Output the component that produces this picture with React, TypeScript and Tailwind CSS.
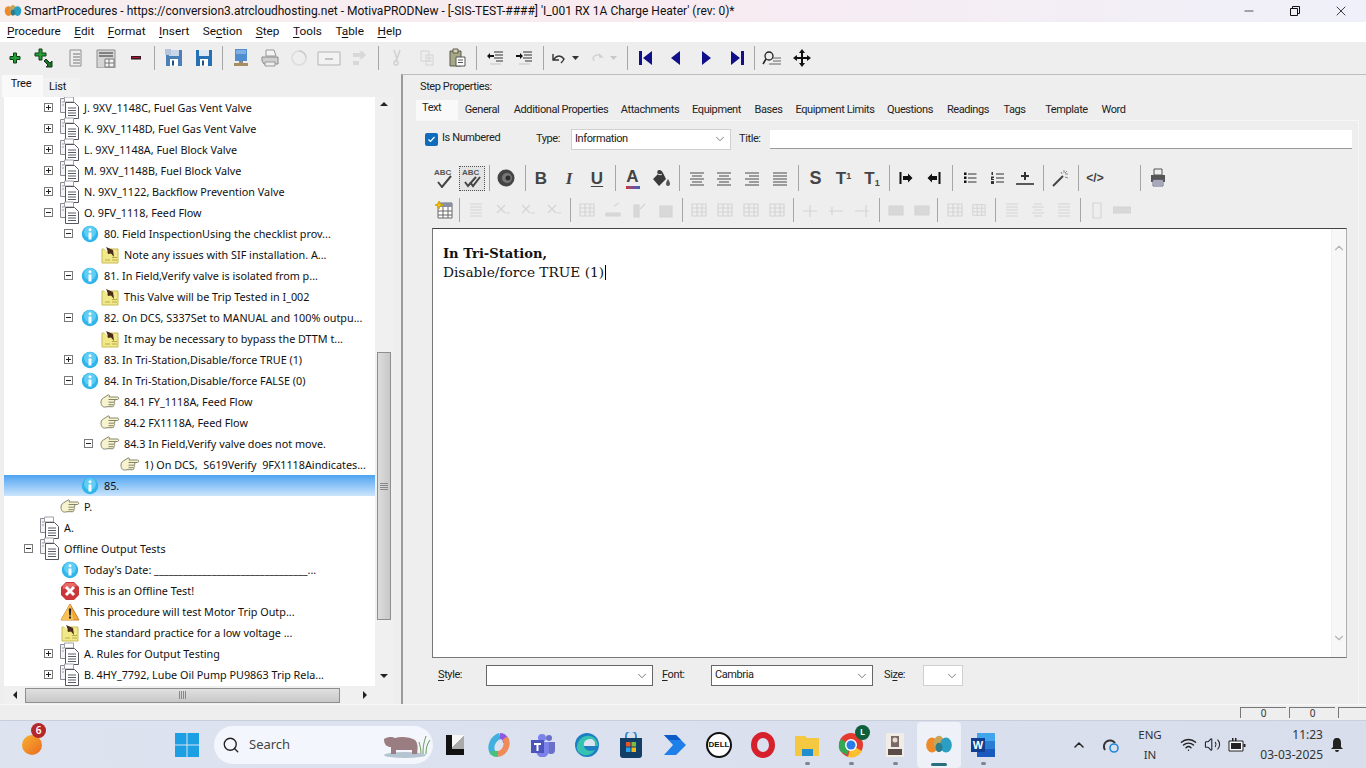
import type { ReactNode } from "react";
import { ChevronDown, ChevronUp, Minus, X, Search, Wifi, Volume2 } from "lucide-react";

type Kind = "docs" | "info" | "note" | "hand" | "error" | "warn";
type Row = { level: 0 | 1 | 2 | 3 | 4; kind: Kind; text: string; exp?: "+" | "-"; selected?: boolean };

const rows: Row[] = [
  { level: 1, kind: "docs", exp: "+", text: "J. 9XV_1148C, Fuel Gas Vent Valve" },
  { level: 1, kind: "docs", exp: "+", text: "K. 9XV_1148D, Fuel Gas Vent Valve" },
  { level: 1, kind: "docs", exp: "+", text: "L. 9XV_1148A, Fuel Block Valve" },
  { level: 1, kind: "docs", exp: "+", text: "M. 9XV_1148B, Fuel Block Valve" },
  { level: 1, kind: "docs", exp: "+", text: "N. 9XV_1122, Backflow Prevention Valve" },
  { level: 1, kind: "docs", exp: "-", text: "O. 9FV_1118, Feed Flow" },
  { level: 2, kind: "info", exp: "-", text: "80. Field InspectionUsing the checklist prov..." },
  { level: 3, kind: "note", text: "Note any issues with SIF installation. A..." },
  { level: 2, kind: "info", exp: "-", text: "81. In Field,Verify valve is isolated from p..." },
  { level: 3, kind: "note", text: "This Valve will be Trip Tested in I_002" },
  { level: 2, kind: "info", exp: "-", text: "82. On DCS, S337Set to MANUAL and 100% outpu..." },
  { level: 3, kind: "note", text: "It may be necessary to bypass the DTTM t..." },
  { level: 2, kind: "info", exp: "+", text: "83. In Tri-Station,Disable/force TRUE (1)" },
  { level: 2, kind: "info", exp: "-", text: "84. In Tri-Station,Disable/force FALSE (0)" },
  { level: 3, kind: "hand", text: "84.1 FY_1118A, Feed Flow" },
  { level: 3, kind: "hand", text: "84.2 FX1118A, Feed Flow" },
  { level: 3, kind: "hand", exp: "-", text: "84.3 In Field,Verify valve does not move." },
  { level: 4, kind: "hand", text: "1) On DCS,  S619Verify  9FX1118Aindicates..." },
  { level: 2, kind: "info", text: "85.", selected: true },
  { level: 1, kind: "hand", text: "P." },
  { level: 0, kind: "docs", text: "A." },
  { level: 0, kind: "docs", exp: "-", text: "Offline Output Tests" },
  { level: 1, kind: "info", text: "Today's Date: ________________________________..." },
  { level: 1, kind: "error", text: "This is an Offline Test!" },
  { level: 1, kind: "warn", text: "This procedure will test Motor Trip Outp..." },
  { level: 1, kind: "note", text: "The standard practice for a low voltage ..." },
  { level: 1, kind: "docs", exp: "+", text: "A. Rules for Output Testing" },
  { level: 1, kind: "docs", exp: "+", text: "B. 4HY_7792, Lube Oil Pump PU9863 Trip Rela..." },
];

const indent = ["pl-[16px]", "pl-[36px]", "pl-[56px]", "pl-[76px]", "pl-[96px]"];

function DocsIcon() {
  return (
    <svg width="22" height="24" viewBox="0 0 22 24" fill="none">
      <path d="M1.5 2.5h9l2 2v12h-11z" fill="#f4f4f6" stroke="#8a8a94" />
      <path d="M5.5 1h9v5h-9z" fill="#fff" stroke="#a0a0a8" />
      <path d="M6.5 6.5h9l4 4v12h-13z" fill="#fff" stroke="#55555f" />
      <path d="M9 12h8M9 14.5h8M9 17h8M9 19.5h8" stroke="#5a5a68" />
      <path d="M3.5 6h1M3.5 9h1" stroke="#444" />
    </svg>
  );
}

function InfoIcon() {
  return (
    <svg width="18" height="18" viewBox="0 0 18 18">
      <circle cx="9" cy="9" r="8.2" fill="#2fb5ea" />
      <circle cx="9" cy="7" r="6" fill="#5fcdf4" />
      <circle cx="9" cy="4.8" r="1.5" fill="#fff" />
      <path d="M7.5 7.5h3v7h-3z" fill="#fff" />
    </svg>
  );
}

function NoteIcon() {
  return (
    <svg width="18" height="18" viewBox="0 0 18 18">
      <path d="M1 3h16v14H1z" fill="#f1e88a" stroke="#c8bb56" />
      <path d="M11 11.5h5M11 14h5M4 14h5" stroke="#b9ac45" />
      <path d="M5 1l7 3 1 7-3-3.5-3 .5z" fill="#4a2a18" />
      <path d="M1 1l4 0 2 5z" fill="#fff" />
    </svg>
  );
}

function HandIcon() {
  return (
    <svg width="20" height="17" viewBox="0 0 20 17" fill="#f8f3cf" stroke="#85856a" className="mt-[2px]">
      <path d="M1 8C1 5 3 4 5 3l3-2c1-.5 2 .5 1 2h8.500c1.500 0 1.500 2.500 0 2.500H14c1.200.3 1.200 2.500 0 2.700 1 .4.800 2.300-.3 2.500.5.800 0 2-1 2H7C3 14 1 12 1 8z" />
      <path d="M8.500 5.500H14M8.500 8.200H14M8.500 10.700h5" />
    </svg>
  );
}

function ErrorIcon() {
  return (
    <svg width="20" height="20" viewBox="0 0 20 20">
      <path d="M6 1h8l5 5v8l-5 5H6l-5-5V6z" fill="#c9373a" />
      <path d="M6 2h8l3 3-14 3V5z" fill="#e66a68" />
      <path d="M6 6l8 8M14 6l-8 8" stroke="#fff" strokeWidth="3" />
    </svg>
  );
}

function WarnIcon() {
  return (
    <svg width="20" height="18" viewBox="0 0 20 18">
      <path d="M10 1l9 16H1z" fill="#f5a83a" stroke="#c5802a" />
      <path d="M10 1l3.500 16H1z" fill="#f8c25a" />
      <path d="M8.800 5.500h2.400l-.4 7h-1.600z" fill="#222" />
      <path d="M9 13.500h2v2H9z" fill="#222" />
    </svg>
  );
}

const kindIcon: Record<Kind, ReactNode> = {
  docs: <DocsIcon />,
  info: <InfoIcon />,
  note: <NoteIcon />,
  hand: <HandIcon />,
  error: <ErrorIcon />,
  warn: <WarnIcon />,
};

function Expander({ open }: { open: boolean }) {
  return (
    <div className="relative h-[9px] w-[9px] border border-[#7a7a7a] bg-white">
      <div className="absolute left-[1px] top-[3px] h-px w-[5px] bg-[#222]" />
      {!open && <div className="absolute left-[3px] top-[1px] h-[5px] w-px bg-[#222]" />}
    </div>
  );
}

function TreeRow({ row }: { row: Row }) {
  return (
    <div
      className={`flex h-[21px] shrink-0 items-center ${indent[row.level]} ${
        row.selected ? "bg-gradient-to-b from-[#4ba3f0] to-[#cbe5fb]" : ""
      }`}
    >
      <div className="flex w-4 shrink-0 justify-center">{row.exp && <Expander open={row.exp === "-"} />}</div>
      <div className="ml-[2px] flex h-[21px] w-6 shrink-0 items-center justify-center">{kindIcon[row.kind]}</div>
      <span className="ml-[2px] mt-[1px] whitespace-pre text-[10.800px] text-[#111]">{row.text}</span>
    </div>
  );
}

function Tri({ dir }: { dir: "up" | "down" | "left" | "right" }) {
  const d = { up: "M0 5l4-4 4 4z", down: "M0 2l4 4 4-4z", left: "M5 0L1 4l4 4z", right: "M2 0l4 4-4 4z" }[dir];
  return (
    <svg width="8" height="8" viewBox="0 0 8 8">
      <path d={d} fill="#222" />
    </svg>
  );
}

// top toolbar icons
function Ico({ children, w = 20, h = 20 }: { children: ReactNode; w?: number; h?: number }) {
  return (
    <svg width={w} height={h} viewBox={`0 0 ${w} ${h}`} fill="none">
      {children}
    </svg>
  );
}

const GreenPlus = () => (
  <Ico>
    <path d="M8.500 5h3v3.500H15v3h-3.500V15h-3v-3.500H5v-3h3.500z" fill="#22a035" stroke="#123d18" />
  </Ico>
);
const GreenPlusArrow = () => (
  <Ico w={22}>
    <path d="M5 1h3v4h4v3H8v4H5V8H1V5h4z" fill="#22a035" stroke="#123d18" />
    <path d="M12 11l4 4 2-2v6h-6l2-2-4-4z" fill="#1f6f2a" stroke="#0f3a15" />
  </Ico>
);
const DocLines = () => (
  <Ico>
    <path d="M4 2h11v16H4z" fill="#eee" stroke="#8f8f8f" />
    <path d="M7 6h7M7 9h7M7 12h7M7 15h7" stroke="#777" />
  </Ico>
);
const DocTable = () => (
  <Ico w={22}>
    <path d="M2 2h18v18H2z" fill="#d5d5d5" stroke="#8f8f8f" />
    <path d="M4 5h14M4 8h14" stroke="#666" strokeWidth="1.500" />
    <path d="M10 11h9v8h-9zM10 15h9M14 11v8" stroke="#777" fill="#f4f4f4" />
  </Ico>
);
const RedMinus = () => (
  <Ico>
    <path d="M5 8h10v3.500H5z" fill="#3b1420" />
    <path d="M6 9h8v1H6z" fill="#a01c30" />
  </Ico>
);
const SaveIcon = ({ pale }: { pale?: boolean }) => (
  <Ico>
    <path d="M2 2h16v16H2z" fill={pale ? "#4b7fb8" : "#2670b5"} />
    <path d="M5 2h10v6H5z" fill={pale ? "#c8d8ea" : "#dce8f4"} />
    <path d="M6 11h8v7H6z" fill="#fff" />
    <path d="M8 12.500h2v5H8z" fill="#1d4f84" />
    {pale && <path d="M1 1h6v6H1z" fill="#b5c6da" />}
  </Ico>
);
const MonitorIcon = () => (
  <Ico>
    <path d="M4 1h12v12H4z" fill="#4f8ed0" />
    <path d="M5 2h10v4H5z" fill="#7fb0e3" />
    <path d="M8 13h4v2H8z" fill="#888" />
    <path d="M3 15h14v3H3z" fill="#a88e60" />
  </Ico>
);
const PrinterIcon = () => (
  <Ico>
    <path d="M6 2l8 0 2 6H6z" fill="#f4f4f4" stroke="#999" />
    <path d="M2 9h16v7H4l-2-3z" fill="#cfcfcf" stroke="#8a8a8a" />
    <path d="M5 14h10v4H5z" fill="#eee" stroke="#999" />
  </Ico>
);
const GhostCircle = () => (
  <Ico>
    <circle cx="10" cy="10" r="7" stroke="#dcdcdc" strokeWidth="1.500" />
    <path d="M10 3a7 7 0 017 7" stroke="#cccccc" strokeWidth="1.500" />
  </Ico>
);
const GhostBox = () => (
  <Ico w={26}>
    <path d="M2 4h22v13H2z" fill="#f2f2f2" stroke="#b4b4b4" />
    <path d="M9 10h8v2H9z" fill="#c4c4c4" />
  </Ico>
);
const GhostArrows = () => (
  <Ico>
    <path d="M4 5h8l-2-2h3l4 4-4 4h-3l2-2H4zM4 13h6v4H4z" fill="#d8d8d8" />
  </Ico>
);
const GhostScissors = () => (
  <Ico>
    <path d="M7 2l3 9 3-9M7 15a2 2 0 104 0 2 2 0 00-4 0M10 11l-3 3" stroke="#d0d0d0" strokeWidth="1.500" />
  </Ico>
);
const GhostCopy = () => (
  <Ico>
    <path d="M4 3h8v10H4zM9 7h7v10H9z" fill="#ededed" stroke="#d4d4d4" />
    <path d="M10 10h5M10 13h5" stroke="#d4d4d4" />
  </Ico>
);
const PasteIcon = () => (
  <Ico>
    <path d="M3 3h11v15H3z" fill="#a7a888" stroke="#5a5a48" />
    <path d="M6 1h5v4H6z" fill="#d5d5c0" stroke="#5a5a48" />
    <path d="M9 9h9v9H9z" fill="#fff" stroke="#555" />
    <path d="M11 12h5M11 14.500h5" stroke="#555" />
  </Ico>
);
const Outdent = ({ flip }: { flip?: boolean }) => (
  <Ico>
    <path d="M9 4h9M10 7h8M9 10h9M11 13h7" stroke="#333" strokeWidth="1.200" />
    <path d="M5 16h11" stroke="#c4c4c4" />
    {flip ? <path d="M2 7h4V5l3 3L6 11V9H2z" fill="#111" /> : <path d="M9 7H5V5L2 8l3 3V9h4z" fill="#111" />}
  </Ico>
);
const UndoIcon = ({ ghost }: { ghost?: boolean }) => (
  <div className="flex items-center gap-[6px]">
    <svg width="14" height="14" viewBox="0 0 14 14" fill="none">
      <path
        d={ghost ? "M9 3l3 3-3 0M12 6c-2-3-7-3-9 1l1 3" : "M1 3v6h6M2 8c3-4 7-4 10 0-1 2-2 3-3 4"}
        stroke={ghost ? "#d0d0d0" : "#333"}
        strokeWidth="1.400"
      />
    </svg>
    <svg width="7" height="4" viewBox="0 0 7 4">
      <path d="M0 0h7L3.500 4z" fill={ghost ? "#c8c8c8" : "#333"} />
    </svg>
  </div>
);
const NavIcon = ({ d }: { d: string }) => (
  <Ico>
    <path d={d} fill="#10108a" />
  </Ico>
);
const FindIcon = () => (
  <Ico w={22}>
    <circle cx="8" cy="8" r="4" stroke="#222" strokeWidth="1.300" />
    <path d="M5 11l-3 5" stroke="#222" strokeWidth="1.500" />
    <path d="M12 10h8M12 13h8M8 16h12" stroke="#666" />
  </Ico>
);
const MoveIcon = () => (
  <Ico>
    <path d="M10 1l3 4h-2v4h4V7l4 3-4 3v-2h-4v4h2l-3 4-3-4h2v-4H5v2l-4-3 4-3v2h4V5H7z" fill="#111" />
  </Ico>
);

function Slot({ w, children }: { w: string; children?: ReactNode }) {
  return <div className={`flex h-full shrink-0 items-center justify-center ${w}`}>{children}</div>;
}

function Sep({ w, h = "h-[24px]" }: { w: string; h?: string }) {
  return (
    <div className={`flex h-full shrink-0 items-center justify-center ${w}`}>
      <div className={`w-px bg-[#a6a6a6] ${h}`} />
    </div>
  );
}

function Glyph({ children, className = "" }: { children: ReactNode; className?: string }) {
  return <span className={`font-['Liberation_Sans'] text-[17px] font-bold leading-none text-[#444] ${className}`}>{children}</span>;
}

const Spell = ({ double }: { double?: boolean }) => (
  <div className="relative h-5 w-5">
    <span className="absolute left-0 top-[-1px] font-['Liberation_Sans'] text-[8px] font-bold text-[#555]">ABC</span>
    <svg width="20" height="20" viewBox="0 0 20 20" fill="none" className="absolute inset-0">
      {double ? (
        <path d="M3 14l3 4 8-9M8 14l3 4 7-9" stroke="#444" strokeWidth="2" />
      ) : (
        <path d="M4 14l4 5 9-11" stroke="#444" strokeWidth="2" />
      )}
    </svg>
  </div>
);

const Speaker = () => (
  <Ico>
    <circle cx="10" cy="10" r="8.500" fill="#444" />
    <circle cx="11" cy="10" r="5" fill="#777" />
    <circle cx="12" cy="10" r="2.500" fill="#2e2e2e" />
  </Ico>
);
const FontColor = () => (
  <div className="flex flex-col items-center">
    <Glyph className="text-[16px]">A</Glyph>
    <div className="mt-[1px] h-[3px] w-[14px] bg-gradient-to-r from-[#c8302e] via-[#7a4a98] to-[#3060b0]" />
  </div>
);
const Bucket = () => (
  <Ico>
    <path d="M8 2c-2 0-2 3-1 4L2 11l6 7 7-7-3-6c-1-2-2-3-4-3z" fill="#3a3a3a" />
    <path d="M7 6c1 1 3 1 4 0" stroke="#eee" />
    <path d="M17 11c1 2 2 3 2 5a2 2 0 01-4 0c0-2 1-3 2-5z" fill="#555" />
  </Ico>
);
const Align = ({ d }: { d: string }) => (
  <Ico w={16} h={16}>
    <path d={d} stroke="#4a4a4a" strokeWidth="1.200" />
  </Ico>
);
const ArrowBar = ({ flip }: { flip?: boolean }) => (
  <Ico w={14} h={14}>
    <path d={flip ? "M11.500 1h2v12h-2zM.5 7L5 2.500V5h5v4H5v2.500z" : "M.5 1h2v12h-2zM13.500 7L9 2.500V5H4v4h5v2.500z"} fill="#111" />
  </Ico>
);
const BulletList = () => (
  <Ico w={14} h={14}>
    <path d="M1 1.500h2.500V4H1zM1 5.500h2.500V8H1zM1 9.500h2.500V12H1z" fill="#111" />
    <path d="M5 3h8.500M5 7h8.500M5 11h8.500" stroke="#333" strokeWidth="1.200" />
  </Ico>
);
const NumList = () => (
  <Ico w={14} h={14}>
    <path d="M1.500 1h1.500v3H1.500zM1 5.500h3V7H2.500v1H4v1H1zM1 10h3v3H1z" fill="#333" />
    <path d="M6 3h8M6 7h8M6 11h8" stroke="#333" strokeWidth="1.200" />
  </Ico>
);
const RuleIcon = () => (
  <Ico w={18} h={18}>
    <path d="M8 3h2v3h3v2h-3v3H8V8H5V6h3z" fill="#333" />
    <path d="M0 15h18" stroke="#333" strokeWidth="1.600" />
  </Ico>
);
const Wand = () => (
  <Ico>
    <path d="M2 18L12 8" stroke="#444" strokeWidth="2" />
    <path d="M13 2v3M17 6h-3M16 3l-2 2M10 4l1 2M17 10l-3-1" stroke="#888" />
  </Ico>
);
const PrintDark = () => (
  <Ico>
    <path d="M6 1h8v6H6z" fill="#eee" stroke="#555" />
    <path d="M3 7h14v7H3z" fill="#555" />
    <path d="M5 12h10v6H5z" fill="#e6e6ef" stroke="#6a6a88" />
    <path d="M6 14h8M6 16h8" stroke="#6a6a88" />
  </Ico>
);
const TableNew = () => (
  <Ico w={20} h={20}>
    <path d="M5 3h14v15H5z" fill="#fff" stroke="#666" />
    <path d="M5 3h14v4H5z" fill="#8a8fa8" />
    <path d="M5 11h14M5 15h14M10 7v11M15 7v11" stroke="#666" />
    <path d="M6 1l1 3 3 1-3 1-1 3-1-3-3-1 3-1z" fill="#f2c51c" stroke="#d9a800" />
  </Ico>
);
const Dis = ({ d, fill }: { d: string; fill?: boolean }) => (
  <Ico w={18} h={18}>
    <path d={d} stroke="#d4d4d4" fill={fill ? "#d8d8d8" : "none"} strokeWidth="1.100" />
  </Ico>
);
const grid = "M2 3h14v12H2zM2 7h14M2 11h14M7 3v12M12 3v12";
const lines = "M3 3h12M3 6h12M3 9h12M3 12h12M3 15h12";
const xx = "M4 4l8 8M12 4l-8 8M13 12h4";

function Select({ w, text, bordered }: { w: string; text?: string; bordered?: boolean }) {
  return (
    <div
      className={`flex h-[21px] shrink-0 items-center justify-between bg-white pl-[3px] pr-[3px] text-[#222] ${w} ${
        bordered ? "border border-[#666]" : "border border-[#d0d0d0]"
      }`}
    >
      <span>{text}</span>
      <ChevronDown size={14} strokeWidth={1.300} className="text-[#555]" />
    </div>
  );
}

function Ul({ pre, u, post }: { pre?: string; u: string; post: string }) {
  return (
    <span>
      {pre}
      <span className="underline underline-offset-2">{u}</span>
      {post}
    </span>
  );
}

const Blobs = ({ size = 18 }: { size?: number }) => (
  <svg width={size} height={size} viewBox="0 0 24 24">
    <ellipse cx="6" cy="12" rx="5" ry="6.500" fill="#ef8a2b" />
    <ellipse cx="12" cy="11" rx="4.500" ry="7" fill="#c7a65a" />
    <ellipse cx="18" cy="12" rx="5" ry="6.500" fill="#2a9fc4" />
    <ellipse cx="12" cy="14" rx="3" ry="4" fill="#2b7d90" />
  </svg>
);

function TaskSlot({ children, dot, active }: { children: ReactNode; dot?: boolean; active?: boolean }) {
  return (
    <div className={`relative flex h-[46px] w-[44px] shrink-0 items-center justify-center rounded-[4px] ${active ? "bg-[#eef1f8]" : ""}`}>
      {children}
      {dot && <div className="absolute bottom-[3px] h-[3px] w-[5px] rounded-full bg-[#7d8590]" />}
      {active && <div className="absolute bottom-[2px] h-[3px] w-[16px] rounded-full bg-[#2a6f80]" />}
    </div>
  );
}

function Status({ w, val }: { w: string; val?: string }) {
  return (
    <div className={`flex h-[11px] shrink-0 items-center justify-center border-l border-t border-[#777] text-[10px] leading-none text-[#333] ${w}`}>
      {val}
    </div>
  );
}

export default function App() {
  return (
    <div className="flex h-[768px] w-[1366px] flex-col overflow-hidden bg-[#eeeeee] font-['Noto_Sans',sans-serif] text-[#111]">
      {/* title bar */}
      <div className="flex h-[22px] shrink-0 items-center bg-gradient-to-r from-[#f7eeee] via-[#f8ebf1] to-[#eff0f9] pr-[2px]">
        <div className="ml-[2px] flex w-[22px] justify-center">
          <Blobs />
        </div>
        <span className="whitespace-pre font-['Roboto'] text-[12px] text-[#111]">
          SmartProcedures - https://conversion3.atrcloudhosting.net - MotivaPRODNew - [-SIS-TEST-####] 'I_001 RX 1A Charge Heater' (rev: 0)*
        </span>
        <div className="ml-auto flex items-center">
          <div className="flex w-[46px] justify-center"><Minus size={14} strokeWidth={1.200} /></div>
          <div className="flex w-[46px] justify-center">
            <svg width="12" height="12" viewBox="0 0 12 12" fill="none" stroke="#111">
              <path d="M1.500 3.500h7v7h-7zM3.500 3.500v-2h7v7h-2" />
            </svg>
          </div>
          <div className="flex w-[46px] justify-center"><X size={16} strokeWidth={1.200} /></div>
        </div>
      </div>

      {/* menu */}
      <div className="flex h-[20px] shrink-0 items-center gap-[13.500px] bg-white pl-[7px] font-['Roboto'] text-[11.800px] text-[#111]">
        <Ul u="P" post="rocedure" />
        <Ul u="E" post="dit" />
        <Ul u="F" post="ormat" />
        <Ul u="I" post="nsert" />
        <Ul pre="Se" u="c" post="tion" />
        <Ul u="S" post="tep" />
        <Ul u="T" post="ools" />
        <Ul pre="T" u="a" post="ble" />
        <Ul u="H" post="elp" />
      </div>

      {/* main toolbar */}
      <div className="flex h-[32px] shrink-0 items-center">
        <Slot w="w-[30px]"><GreenPlus /></Slot>
        <Slot w="w-[30px]"><GreenPlusArrow /></Slot>
        <Slot w="w-[31px]"><DocLines /></Slot>
        <Slot w="w-[30px]"><DocTable /></Slot>
        <Slot w="w-[29px]"><RedMinus /></Slot>
        <Sep w="w-[9px]" />
        <Slot w="w-[30px]"><SaveIcon pale /></Slot>
        <Slot w="w-[29px]"><SaveIcon /></Slot>
        <Sep w="w-[8px]" />
        <Slot w="w-[29px]"><MonitorIcon /></Slot>
        <Slot w="w-[29px]"><PrinterIcon /></Slot>
        <Slot w="w-[30px]"><GhostCircle /></Slot>
        <Slot w="w-[30px]"><GhostBox /></Slot>
        <Slot w="w-[30px]"><GhostArrows /></Slot>
        <Sep w="w-[8px]" />
        <Slot w="w-[30px]"><GhostScissors /></Slot>
        <Slot w="w-[29px]"><GhostCopy /></Slot>
        <Slot w="w-[31px]"><PasteIcon /></Slot>
        <Sep w="w-[8px]" />
        <Slot w="w-[29px]"><Outdent /></Slot>
        <Slot w="w-[30px]"><Outdent flip /></Slot>
        <Sep w="w-[8px]" />
        <Slot w="w-[37px]"><UndoIcon /></Slot>
        <Slot w="w-[39px]"><UndoIcon ghost /></Slot>
        <Sep w="w-[8px]" />
        <Slot w="w-[30px]"><NavIcon d="M3 3h3v14H3zM16 3v14L7 10z" /></Slot>
        <Slot w="w-[30px]"><NavIcon d="M14 3v14L5 10z" /></Slot>
        <Slot w="w-[30px]"><NavIcon d="M6 3v14l9-7z" /></Slot>
        <Slot w="w-[31px]"><NavIcon d="M14 3h3v14h-3zM4 3v14l9-7z" /></Slot>
        <Sep w="w-[5px]" />
        <Slot w="w-[30px]"><FindIcon /></Slot>
        <Slot w="w-[30px]"><MoveIcon /></Slot>
      </div>

      {/* main */}
      <div className="flex h-[630px] shrink-0">
        {/* left panel */}
        <div className="flex w-[393px] shrink-0 flex-col pl-[4px]">
          <div className="flex h-[23px] shrink-0 items-end font-['Roboto'] text-[11px] tracking-[-0.2px]">
            <div className="-ml-[2px] flex h-[22px] w-[41px] items-start justify-center bg-[#f9f9f9] pr-[3px] pt-[1px]">Tree</div>
            <div className="flex h-[19px] w-[37px] items-center justify-center bg-[#f1f1f1] pr-[8px]">List</div>
          </div>
          <div className="flex h-[589px] shrink-0">
            <div className="flex w-[371px] flex-col overflow-hidden bg-white">
              {rows.map((r) => (
                <TreeRow key={r.text} row={r} />
              ))}
            </div>
            <div className="flex w-[18px] flex-col items-center bg-[#f0f0f0]">
              <div className="mt-[4px]"><Tri dir="up" /></div>
              <div className="mt-[243px] flex h-[268px] w-[14px] items-center justify-center border border-[#8e8e8e] bg-gradient-to-r from-[#dcdcdc] to-[#c8c8c8]">
                <div className="h-[7px] w-[8px] bg-[repeating-linear-gradient(180deg,#888_0px,#888_1px,transparent_1px,transparent_2px)]" />
              </div>
              <div className="mt-[52px]"><Tri dir="down" /></div>
            </div>
          </div>
          <div className="flex h-[18px] w-[389px] shrink-0 items-center bg-[#f0f0f0]">
            <div className="ml-[8px]"><Tri dir="left" /></div>
            <div className="ml-[5px] flex h-[15px] w-[315px] items-center justify-center border border-[#8e8e8e] bg-gradient-to-b from-[#e0e0e0] to-[#c8c8c8]">
              <div className="h-[8px] w-[7px] bg-[repeating-linear-gradient(90deg,#888_0px,#888_1px,transparent_1px,transparent_2px)]" />
            </div>
            <div className="ml-[21px]"><Tri dir="right" /></div>
          </div>
        </div>

        {/* splitter + right panel */}
        <div className="w-[8px] shrink-0" />
        <div className="flex flex-1 flex-col border-l-2 border-t border-[#9a9a9a] border-t-[#bdbdbd] font-['Roboto'] text-[11px] tracking-[-0.4px]">
          <div className="flex h-[25px] shrink-0 items-center pl-[17px] text-[#222]">Step Properties:</div>
          <div className="flex h-[20px] shrink-0 items-center whitespace-nowrap pl-[13px] text-[#222]">
            <div className="flex h-[21px] w-[42px] items-start justify-start bg-[#f9f9f9] pl-[6px]">Text</div>
            <div className="flex w-[48px] justify-center pt-px">General</div>
            <div className="ml-[7px] flex w-[96px] justify-center pt-px">Additional Properties</div>
            <div className="ml-[12px] flex w-[58px] justify-center pt-px">Attachments</div>
            <div className="ml-[13px] flex w-[49px] justify-center pt-px">Equipment</div>
            <div className="ml-[13px] flex w-[29px] justify-center pt-px">Bases</div>
            <div className="ml-[13px] flex w-[78px] justify-center pt-px">Equipment Limits</div>
            <div className="ml-[13px] flex w-[46px] justify-center pt-px">Questions</div>
            <div className="ml-[13px] flex w-[44px] justify-center pt-px">Readings</div>
            <div className="ml-[13px] flex w-[23px] justify-center pt-px">Tags</div>
            <div className="ml-[19px] flex w-[43px] justify-center pt-px">Template</div>
            <div className="ml-[13px] flex w-[25px] justify-center pt-px">Word</div>
          </div>

          <div className="ml-[13px] mr-[7px] flex h-[584px] flex-col border-t border-r border-[#f6f6f6] pl-[9px] pr-[6px]">
            {/* type row */}
            <div className="mt-[8px] flex h-[20px] shrink-0 items-center text-[#222]">
              <div className="mr-[4px] flex h-[13px] w-[13px] items-center justify-center rounded-[2px] bg-[#0f6cbd]">
                <svg width="9" height="9" viewBox="0 0 9 9" fill="none">
                  <path d="M1.500 4.500l2 2 4-4.500" stroke="#fff" strokeWidth="1.200" />
                </svg>
              </div>
              <span className="-mt-[2px] w-[94px]">Is Numbered</span>
              <span className="w-[35px]">Type:</span>
              <Select w="w-[160px]" text="Information" />
              <span className="ml-[8px] w-[31px]">Title:</span>
              <div className="h-[19px] flex-1 border-b border-[#9a9a9a] bg-white" />
            </div>

            {/* format row */}
            <div className="ml-[5px] mt-[13px] flex h-[32px] shrink-0 items-center tracking-normal">
              <Slot w="w-[28px]"><Spell /></Slot>
              <Slot w="w-[28px]">
                <div className="flex h-[25px] w-[26px] items-center justify-center border border-dotted border-[#555] bg-[#e4e4e4]"><Spell double /></div>
              </Slot>
              <Sep w="w-[7px]" h="h-[26px]" />
              <Slot w="w-[26px]"><Speaker /></Slot>
              <Slot w="w-[4px]" />
              <Sep w="w-[4px]" h="h-[26px]" />
              <Slot w="w-[28px]"><Glyph>B</Glyph></Slot>
              <Slot w="w-[28px]"><Glyph className="font-['Liberation_Serif'] italic">I</Glyph></Slot>
              <Slot w="w-[28px]"><Glyph className="underline underline-offset-2">U</Glyph></Slot>
              <Sep w="w-[8px]" h="h-[26px]" />
              <Slot w="w-[27px]"><FontColor /></Slot>
              <Slot w="w-[29px]"><Bucket /></Slot>
              <Sep w="w-[8px]" h="h-[26px]" />
              <Slot w="w-[27px]"><Align d="M1 3h14M3 6h10M1 9h14M3 12h10M1 15h14" /></Slot>
              <Slot w="w-[28px]"><Align d="M1 3h14M3 6h10M1 9h14M3 12h10M1 15h14" /></Slot>
              <Slot w="w-[28px]"><Align d="M1 3h14M5 6h10M1 9h14M5 12h10M1 15h14" /></Slot>
              <Slot w="w-[28px]"><Align d="M1 3h14M1 6h14M1 9h14M1 12h14M1 15h14" /></Slot>
              <Sep w="w-[8px]" h="h-[26px]" />
              <Slot w="w-[27px]"><Glyph className="text-[18px]">S</Glyph></Slot>
              <Slot w="w-[29px]"><Glyph>T<sup className="text-[9px]">1</sup></Glyph></Slot>
              <Slot w="w-[28px]"><Glyph>T<sub className="text-[9px]">1</sub></Glyph></Slot>
              <Sep w="w-[6px]" h="h-[26px]" />
              <Slot w="w-[28px]"><ArrowBar /></Slot>
              <Slot w="w-[28px]"><ArrowBar flip /></Slot>
              <Sep w="w-[8px]" h="h-[26px]" />
              <Slot w="w-[27px]"><BulletList /></Slot>
              <Slot w="w-[28px]"><NumList /></Slot>
              <Slot w="w-[28px]"><RuleIcon /></Slot>
              <Sep w="w-[8px]" h="h-[26px]" />
              <Slot w="w-[27px]"><Wand /></Slot>
              <Sep w="w-[8px]" h="h-[26px]" />
              <Slot w="w-[26px]">
                <span className="font-['Liberation_Sans'] text-[12px] font-bold text-[#444]">&lt;/&gt;</span>
              </Slot>
              <Slot w="w-[28px]" />
              <Sep w="w-[8px]" h="h-[26px]" />
              <Slot w="w-[28px]"><PrintDark /></Slot>
            </div>

            {/* table row */}
            <div className="ml-[5px] flex h-[32px] shrink-0 items-center">
              <Slot w="w-[26px]"><TableNew /></Slot>
              <Sep w="w-[6px]" />
              <Slot w="w-[27px]"><Dis d={lines} /></Slot>
              <Slot w="w-[25px]"><Dis d={xx} /></Slot>
              <Slot w="w-[26px]"><Dis d={xx} /></Slot>
              <Slot w="w-[26px]"><Dis d={xx} /></Slot>
              <Sep w="w-[8px]" />
              <Slot w="w-[26px]"><Dis d={grid} /></Slot>
              <Slot w="w-[26px]"><Dis d="M2 12h14v3H2zM10 5l5-3" fill /></Slot>
              <Slot w="w-[26px]"><Dis d="M4 4h5v12H4zM10 8l5-5" fill /></Slot>
              <Slot w="w-[26px]"><Dis d="M4 5h12v11H4z" fill /></Slot>
              <Sep w="w-[8px]" />
              <Slot w="w-[26px]"><Dis d={grid} /></Slot>
              <Slot w="w-[26px]"><Dis d={grid} /></Slot>
              <Slot w="w-[26px]"><Dis d={grid} /></Slot>
              <Slot w="w-[26px]"><Dis d={grid} /></Slot>
              <Sep w="w-[7px]" />
              <Slot w="w-[26px]"><Dis d="M2 10h14M9 4v12" /></Slot>
              <Slot w="w-[25px]"><Dis d="M2 10h14M5 6v8" /></Slot>
              <Slot w="w-[27px]"><Dis d="M2 10h14M13 4v12" /></Slot>
              <Sep w="w-[8px]" />
              <Slot w="w-[25px]"><Dis d="M2 5h14v9H2z" fill /></Slot>
              <Slot w="w-[28px]"><Dis d="M2 5h14v9H2z" fill /></Slot>
              <Sep w="w-[3px]" />
              <Slot w="w-[32px]"><Dis d={grid} /></Slot>
              <Slot w="w-[16px]"><Dis d={grid} /></Slot>
              <Sep w="w-[16px]" />
              <Slot w="w-[18px]"><Dis d={lines} /></Slot>
              <Slot w="w-[34px]"><Dis d="M5 3h8M3 6h12M5 9h8M3 12h12M5 15h8" /></Slot>
              <Slot w="w-[18px]"><Dis d={lines} /></Slot>
              <Sep w="w-[14px]" />
              <Slot w="w-[20px]"><Dis d="M5 2h8v15H5z" /></Slot>
              <Slot w="w-[30px]"><Dis d="M0 6h18v6H0z" fill /></Slot>
            </div>

            {/* editor */}
            <div className="ml-[7px] mr-[5px] mt-[2px] flex h-[430px] shrink-0 border border-b-[#777] border-l-[#777] border-r-[#b0b0b0] border-t-[#444] bg-white">
              <div className="flex-1 pl-[10px] pt-[15px] font-['DejaVu_Serif',serif] text-[13.700px] leading-[19px] tracking-normal text-[#111]">
                <div className="text-[13.100px] font-bold">In Tri-Station,</div>
                <div className="flex items-center">
                  Disable/force TRUE (1)
                  <span className="ml-px inline-block h-[15px] w-px bg-black" />
                </div>
              </div>
              <div className="flex w-[15px] shrink-0 flex-col items-center justify-between border-l border-[#f0f0f0] bg-[#f7f7f7] py-[12px] text-[#b5b5b5]">
                <ChevronUp size={14} />
                <ChevronDown size={14} />
              </div>
            </div>

            {/* font row */}
            <div className="ml-[13px] mt-[7px] flex h-[21px] shrink-0 items-center text-[#222]">
              <span className="w-[48px]"><Ul u="S" post="tyle:" /></span>
              <Select w="w-[167px]" bordered />
              <span className="ml-[9px] w-[49px]"><Ul u="F" post="ont:" /></span>
              <Select w="w-[162px]" text="Cambria" bordered />
              <span className="ml-[11px] w-[39px]"><Ul pre="Si" u="z" post="e:" /></span>
              <Select w="w-[40px]" />
            </div>
          </div>
        </div>
      </div>

      {/* status bar */}
      <div className="flex h-[16px] shrink-0 items-end justify-end gap-[3px] border-t border-[#f8f8f8] pb-[2px]">
        <Status w="w-[46px]" val="0" />
        <Status w="w-[46px]" val="0" />
        <Status w="w-[28px]" />
      </div>

      {/* taskbar */}
      <div className="flex h-[48px] shrink-0 items-center border-t border-[#c8cedc] bg-gradient-to-r from-[#dde3ef] to-[#d8deec]">
        <div className="relative ml-[22px] flex w-[143px] items-center">
          <div className="h-[20px] w-[20px] rounded-full bg-gradient-to-br from-[#f8b030] to-[#e86a20]" />
          <div className="absolute left-[9px] top-[-12px] flex h-[15px] w-[15px] items-center justify-center rounded-full bg-[#b4282c] text-[10px] font-semibold text-white">6</div>
        </div>
        <TaskSlot>
          <svg width="24" height="24" viewBox="0 0 24 24">
            <path d="M0 0h11.500v11.500H0zM12.500 0H24v11.500H12.500zM0 12.500h11.500V24H0zM12.500 12.500H24V24H12.500z" fill="#1d9fe4" />
          </svg>
        </TaskSlot>
        <div className="ml-[5px] flex h-[38px] w-[219px] shrink-0 items-center rounded-full bg-[#f3f6fc] pl-[8px]">
          <Search size={18} strokeWidth={1.800} className="text-[#222]" />
          <span className="ml-[9px] text-[13px] text-[#444]">Search</span>
          <svg width="50" height="30" viewBox="0 0 50 30" className="ml-auto mr-[2px]">
            <path d="M42 24c0-8 1-12 3-18M45 24c0-6 1-10 4-14M40 24c0-5-1-8-2-12" stroke="#6a9a5a" fill="none" />
            <ellipse cx="24" cy="25" rx="21" ry="3" fill="#b4c4d0" />
            <path d="M3 9c5-3 9-2 11-1 6-2 15-1 20 2 3 3 3 8 2 14h-5v-4H15v4h-5v-7c-4 0-7-2-7-8z" fill="#9a7d80" />
          </svg>
        </div>
        <TaskSlot>
          <div className="h-[20px] w-[18px] bg-[linear-gradient(135deg,#f6f6f6_0%,#f6f6f6_50%,#aaa_50%)] shadow-[inset_0_-6px_0_#111,inset_6px_0_0_#111]" />
        </TaskSlot>
        <TaskSlot>
          <svg width="24" height="24" viewBox="0 0 24 24" fill="none">
            <path d="M6 20C2 14 6 5 13 3" stroke="#3fb0e0" strokeWidth="6" />
            <path d="M13 3c4 0 6 3 6 7" stroke="#8a5ae0" strokeWidth="6" />
            <path d="M18 5c4 6 0 15-7 16" stroke="#f08a5a" strokeWidth="6" />
            <path d="M11 21c-3 0-5-1-5-3" stroke="#4ac07a" strokeWidth="6" />
          </svg>
        </TaskSlot>
        <TaskSlot>
          <svg width="26" height="24" viewBox="0 0 26 24">
            <circle cx="19" cy="5" r="3" fill="#6a70c8" />
            <path d="M15 9h10v8a4 4 0 01-8 0z" fill="#6a70c8" />
            <circle cx="12" cy="5" r="4" fill="#7b83eb" />
            <path d="M6 9h13v9a6 6 0 01-13 0z" fill="#7b83eb" />
            <path d="M1 7h13v13H1z" fill="#4b53bc" />
            <path d="M4 10h7v2H8.500v6h-2v-6H4z" fill="#fff" />
          </svg>
        </TaskSlot>
        <TaskSlot>
          <svg width="26" height="26" viewBox="0 0 26 26" fill="none">
            <circle cx="13" cy="13" r="12" fill="#1c7fc4" />
            <path d="M3 14C4 7 10 3 16 4c5 1 8 5 8 10H10c0 4 6 6 11 4-2 4-7 6-11 5-5-1-8-5-7-9z" fill="#36c1b0" />
            <path d="M10 14c-1-4 2-7 6-7 3 0 5 2 5 5v2z" fill="#dde3ef" />
          </svg>
        </TaskSlot>
        <TaskSlot>
          <svg width="24" height="26" viewBox="0 0 24 26">
            <path d="M7 7V4a5 5 0 0110 0v3" stroke="#3a8cc8" strokeWidth="2" fill="none" />
            <path d="M1 6h22v17a3 3 0 01-3 3H4a3 3 0 01-3-3z" fill="#123f68" />
            <path d="M7 10h4.500v4.500H7z" fill="#e8552c" />
            <path d="M12.500 10H17v4.500h-4.500z" fill="#7fbc3a" />
            <path d="M7 15.500h4.500V20H7z" fill="#2ba0e8" />
            <path d="M12.500 15.500H17V20h-4.500z" fill="#f2b81c" />
          </svg>
        </TaskSlot>
        <TaskSlot>
          <svg width="24" height="24" viewBox="0 0 24 24">
            <path d="M1 2h12l10 10-10 10H1l9-10z" fill="#1f7fe8" />
            <path d="M1 2h12l5 5H6z" fill="#0c5cc8" />
          </svg>
        </TaskSlot>
        <TaskSlot>
          <div className="flex h-[26px] w-[26px] items-center justify-center rounded-full border-2 border-[#111] bg-white font-['Liberation_Sans'] text-[8px] font-bold text-[#111]">DELL</div>
        </TaskSlot>
        <TaskSlot>
          <div className="h-[26px] w-[24px] rounded-[50%] border-[6px] border-[#d6202c]" />
        </TaskSlot>
        <TaskSlot dot>
          <svg width="26" height="26" viewBox="0 0 26 26">
            <path d="M1 4h10l2 2h12v18H1z" fill="#f5c842" />
            <path d="M8 17h11v7H8z" fill="#1f8fd0" />
          </svg>
        </TaskSlot>
        <TaskSlot dot>
          <div className="relative">
            <svg width="26" height="26" viewBox="0 0 26 26">
              <circle cx="13" cy="13" r="12" fill="#e53a30" />
              <path d="M13 13L3 7a12 12 0 00-1 12l7 4z" fill="#36a853" />
              <path d="M13 13l-3 12a12 12 0 0014-6z" fill="#fbc02d" />
              <circle cx="13" cy="13" r="6" fill="#fff" />
              <circle cx="13" cy="13" r="4.500" fill="#2a7de8" />
            </svg>
            <div className="absolute -right-[6px] -top-[7px] flex h-[15px] w-[15px] items-center justify-center rounded-full bg-[#0e5f3c] text-[9px] font-semibold text-white">L</div>
          </div>
        </TaskSlot>
        <TaskSlot dot>
          <svg width="24" height="26" viewBox="0 0 24 26">
            <path d="M3 1h18v24H3z" fill="#f2ece6" />
            <path d="M8 4h8v11H8z" fill="#7a6a66" />
            <circle cx="12" cy="8" r="2.500" fill="#e8dcd0" />
            <path d="M5 17h14v6H5z" fill="#5a4a48" />
          </svg>
        </TaskSlot>
        <TaskSlot active>
          <Blobs size={28} />
        </TaskSlot>
        <TaskSlot dot>
          <svg width="28" height="28" viewBox="0 0 28 28">
            <path d="M8 2h18v24H8z" fill="#2b7cd3" />
            <path d="M8 2h18v8H8z" fill="#41a5ee" />
            <path d="M8 18h18v8H8z" fill="#185abd" />
            <path d="M2 7h14v14H2z" fill="#103f91" />
            <text x="9" y="18" textAnchor="middle" fontSize="11" fontWeight="700" fill="#fff" fontFamily="Liberation Sans">W</text>
          </svg>
        </TaskSlot>

        {/* tray */}
        <div className="ml-[62px] flex w-[24px] justify-center">
          <ChevronUp size={16} strokeWidth={2.200} className="text-[#222]" />
        </div>
        <div className="ml-[8px] flex w-[24px] justify-center">
          <svg width="18" height="18" viewBox="0 0 18 18" fill="none">
            <path d="M3 14a6 6 0 1110-7" stroke="#333" strokeWidth="2" />
            <circle cx="12" cy="12" r="4" stroke="#1f88d8" strokeWidth="1.600" />
          </svg>
        </div>
        <div className="ml-[8px] flex w-[38px] flex-col items-center text-[11.500px] leading-[20px] text-[#333]">
          <span>ENG</span>
          <span>IN</span>
        </div>
        <div className="ml-[7px] flex w-[24px] justify-center"><Wifi size={17} className="text-[#222]" /></div>
        <div className="flex w-[24px] justify-center"><Volume2 size={17} strokeWidth={1.500} className="text-[#222]" /></div>
        <div className="flex w-[26px] justify-center">
          <svg width="18" height="14" viewBox="0 0 18 14">
            <path d="M1 3h14v10H1z" fill="#fff" stroke="#222" />
            <path d="M3 5h10v6H3z" fill="#222" />
            <path d="M15.500 6h2v3h-2z" fill="#222" />
            <path d="M4 0h1.500v3H4zM7 0h1.500v3H7z" fill="#222" />
          </svg>
        </div>
        <div className="flex w-[73px] flex-col items-end text-[12px] leading-[20px] text-[#333]">
          <span>11:23</span>
          <span>03-03-2025</span>
        </div>
        <div className="ml-[7px] flex w-[14px] justify-center">
          <svg width="14" height="16" viewBox="0 0 14 16">
            <path d="M7 1c3 0 4 2 4 5v4l2 2H1l2-2V6c0-3 1-5 4-5zM5 13h4a2 2 0 01-4 0z" fill="#222" />
          </svg>
        </div>
      </div>
    </div>
  );
}
